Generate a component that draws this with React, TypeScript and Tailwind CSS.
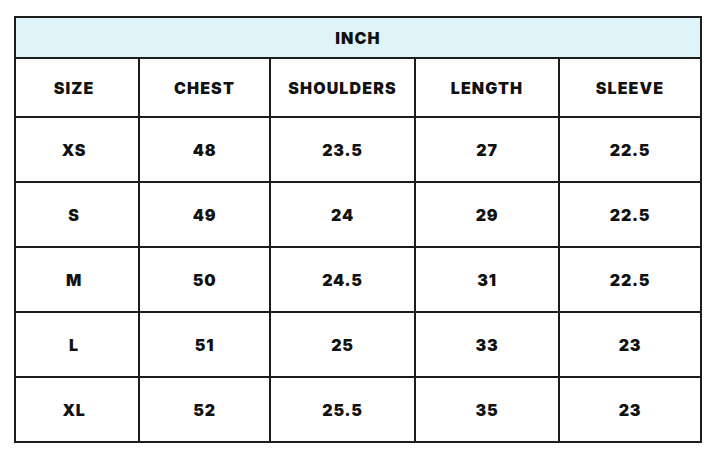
const columns = ["SIZE", "CHEST", "SHOULDERS", "LENGTH", "SLEEVE"];

const rows = [
  ["XS", "48", "23.5", "27", "22.5"],
  ["S", "49", "24", "29", "22.5"],
  ["M", "50", "24.5", "31", "22.5"],
  ["L", "51", "25", "33", "23"],
  ["XL", "52", "25.5", "35", "23"],
];

export default function App() {
  return (
    <div className="w-[717px] h-[460px] bg-white pt-[16px] pl-[14px] font-['Inter',sans-serif] text-[#111]">
      <div className="w-[688px] border-2 border-[#1c1c1c] bg-[#1c1c1c] grid grid-cols-[122px_129px_143px_142px_140px] grid-rows-[39px_57px_repeat(5,63px)] gap-[2px]">
        <div className="col-span-5 bg-[#dff4f9] flex items-center justify-center text-[16px] font-black tracking-[0.07em]">
          INCH
        </div>
        {columns.map((col, i) => (
          <div
            key={col}
            className={`bg-white flex items-center justify-center text-[16px] font-black tracking-[0.07em] ${i === 0 ? "pr-[6px]" : ""}`}
          >
            {col}
          </div>
        ))}
        {rows.map(row =>
          row.map((cell, i) => (
            <div
              key={row[0] + i}
              className={`bg-white flex items-center justify-center text-[16px] font-black tracking-[0.05em] ${i === 0 ? "pr-[6px]" : ""}`}
            >
              {cell}
            </div>
          ))
        )}
      </div>
    </div>
  );
}
